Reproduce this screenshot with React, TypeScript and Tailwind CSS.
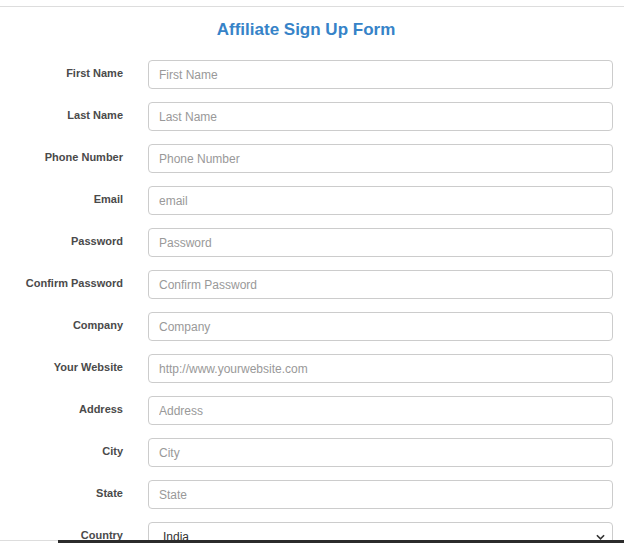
import React from 'react';

const fields = [
  { label: 'First Name', placeholder: 'First Name', type: 'text' },
  { label: 'Last Name', placeholder: 'Last Name', type: 'text' },
  { label: 'Phone Number', placeholder: 'Phone Number', type: 'text' },
  { label: 'Email', placeholder: 'email', type: 'email' },
  { label: 'Password', placeholder: 'Password', type: 'password' },
  { label: 'Confirm Password', placeholder: 'Confirm Password', type: 'password' },
  { label: 'Company', placeholder: 'Company', type: 'text' },
  { label: 'Your Website', placeholder: 'http://www.yourwebsite.com', type: 'text' },
  { label: 'Address', placeholder: 'Address', type: 'text' },
  { label: 'City', placeholder: 'City', type: 'text' },
  { label: 'State', placeholder: 'State', type: 'text' },
];

const App: React.FC = () => {
  return (
    <div className="h-[543px] overflow-hidden bg-white font-['Liberation_Sans',Arial,sans-serif]">
      <div className="mt-[6px] border-t border-[#dddddd]">
        <h2 className="pt-[11px] pb-[18px] pr-[12px] text-center text-[17px] leading-[24px] font-bold text-[#3683c8]">
          Affiliate Sign Up Form
        </h2>

        <form className="pr-[11px]">
          {fields.map((f) => (
            <div key={f.label} className="flex items-center h-[29px] mb-[13px]">
              <label className="w-[123px] shrink-0 text-right text-[11px] font-bold text-[#4a4a4a] mb-[2px]">
                {f.label}
              </label>
              <input
                type={f.type}
                placeholder={f.placeholder}
                className="ml-[25px] flex-1 h-[29px] rounded-[4px] border border-[#cccccc] px-[10px] text-[12px] text-[#555555] placeholder:text-[#999999] outline-none"
              />
            </div>
          ))}

          {/* Country */}
          <div className="flex items-center h-[29px]">
            <label className="w-[123px] shrink-0 text-right text-[11px] font-bold text-[#4a4a4a] mb-[2px]">
              Country
            </label>
            <div className="relative ml-[25px] flex-1">
              <select
                defaultValue="India"
                className="w-full h-[29px] appearance-none rounded-[4px] border border-[#cccccc] bg-white pl-[14px] text-[12px] text-[#333333] outline-none"
              >
                <option>India</option>
                <option>United States</option>
                <option>United Kingdom</option>
              </select>
              <svg
                className="pointer-events-none absolute right-[8px] top-[12px] h-[7px] w-[9px]"
                viewBox="0 0 10 7"
                fill="none"
                stroke="#333"
                strokeWidth="1.8"
              >
                <path d="M1 1l4 4 4-4" />
              </svg>
            </div>
          </div>
        </form>
      </div>

      {/* bottom edge */}
      <div className="fixed bottom-0 left-0 right-0 flex h-[3px]">
        <div className="w-[58px] border-t border-[#dddddd]" />
        <div className="flex-1 bg-[#2b2b2b]" />
      </div>
    </div>
  );
};

export default App;
